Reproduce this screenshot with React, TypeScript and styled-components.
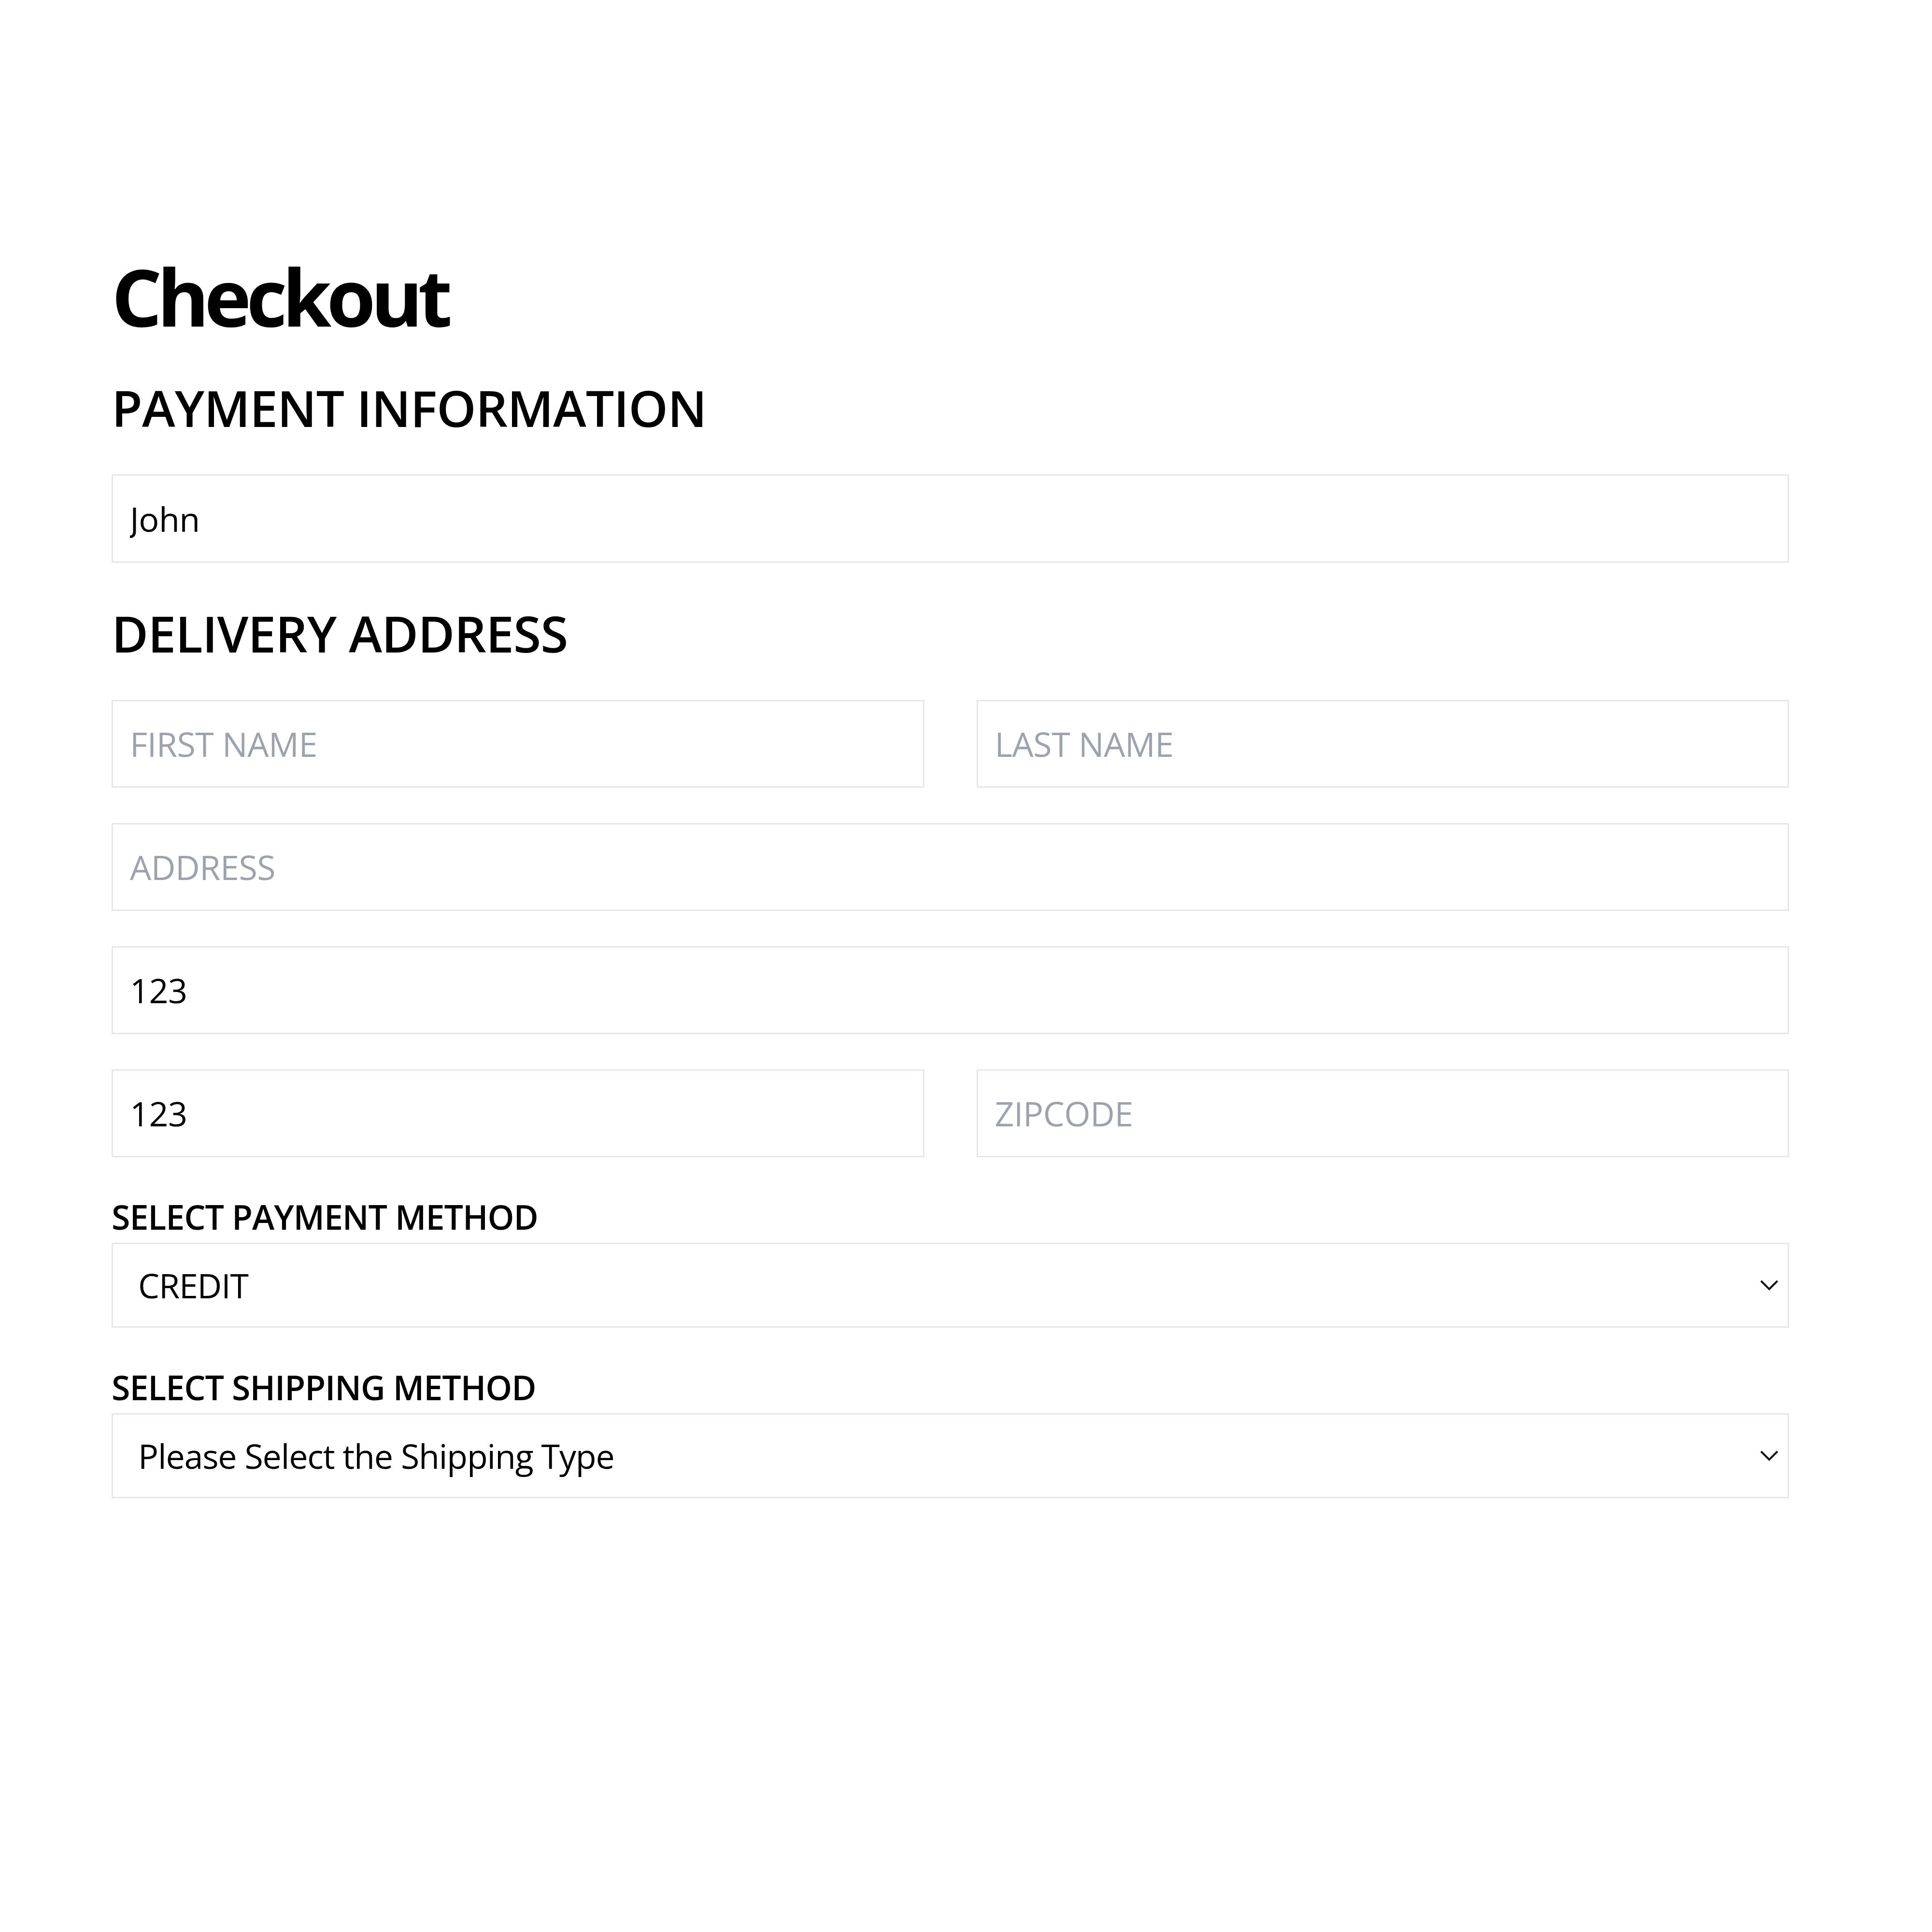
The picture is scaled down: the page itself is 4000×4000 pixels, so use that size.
import React from "react";
import styled, { createGlobalStyle } from "styled-components";

const GlobalStyle = createGlobalStyle`
  html, body {
    margin: 0;
    padding: 0;
    background: #ffffff;
  }
  body {
    font-family: "Open Sans", "Noto Sans", "Liberation Sans", sans-serif;
    color: #000000;
  }
  * { box-sizing: border-box; }
`;

const Page = styled.main`
  width: 3473px;
  margin-left: 231px;
  padding-top: 531px;
  padding-bottom: 600px;
  display: flex;
  flex-direction: column;
`;

const Title = styled.h1`
  margin: 0;
  font-size: 164px;
  line-height: 164px;
  font-weight: 700;
  letter-spacing: -10px;
`;

const SectionTitle = styled.h2<{ $mt: number }>`
  margin: ${(p) => p.$mt}px 0 0 0;
  font-size: 104px;
  line-height: 104px;
  font-weight: 600;
  letter-spacing: -1px;
`;

const Field = styled.input`
  display: block;
  width: 100%;
  height: 182px;
  margin: 0;
  padding: 0 35px;
  border: 3px solid #e5e7eb;
  border-radius: 0;
  background: #ffffff;
  font-family: inherit;
  font-size: 70px;
  font-weight: 400;
  letter-spacing: -0.5px;
  color: #000000;
  outline: none;
  &::placeholder {
    color: #9ca3af;
    opacity: 1;
  }
`;

const TopField = styled(Field)`
  margin-top: 86px;
  height: 183px;
`;

const FieldStack = styled.div`
  margin-top: 86px;
  display: flex;
  flex-direction: column;
  gap: 73px;
`;

const Row = styled.div`
  display: grid;
  grid-template-columns: 1fr 1fr;
  column-gap: 108px;
`;

const SelectGroup = styled.div`
  margin-top: 88px;
  display: flex;
  flex-direction: column;
  gap: 19px;
`;

const Label = styled.label`
  display: block;
  font-size: 70px;
  line-height: 70px;
  font-weight: 600;
  letter-spacing: -1.1px;
`;

const SelectWrap = styled.div`
  position: relative;
  height: 176px;
`;

const Select = styled.select`
  appearance: none;
  -webkit-appearance: none;
  display: block;
  width: 100%;
  height: 100%;
  margin: 0;
  padding: 0 120px 0 52px;
  border: 3px solid #e5e7eb;
  border-radius: 0;
  background: #ffffff;
  font-family: inherit;
  font-size: 70px;
  font-weight: 400;
  letter-spacing: -1.2px;
  color: #000000;
  outline: none;
`;

const Chevron = styled.svg`
  position: absolute;
  right: 22px;
  top: 50%;
  width: 38px;
  height: 22px;
  transform: translateY(-50%);
  pointer-events: none;
`;

function ChevronIcon() {
  return (
    <Chevron viewBox="0 0 38 22" fill="none">
      <polyline
        points="2,2 19,19 36,2"
        stroke="#111111"
        strokeWidth="4"
        strokeLinecap="butt"
        strokeLinejoin="miter"
      />
    </Chevron>
  );
}

export default function App() {
  return (
    <>
      <GlobalStyle />
      <Page>
        <Title>Checkout</Title>
        <SectionTitle $mt={97}>PAYMENT INFORMATION</SectionTitle>
        <TopField defaultValue="John" />
        <SectionTitle $mt={94}>DELIVERY ADDRESS</SectionTitle>
        <FieldStack>
          <Row>
            <Field placeholder="FIRST NAME" />
            <Field placeholder="LAST NAME" />
          </Row>
          <Field placeholder="ADDRESS" />
          <Field defaultValue="123" />
          <Row>
            <Field defaultValue="123" />
            <Field placeholder="ZIPCODE" />
          </Row>
        </FieldStack>
        <SelectGroup>
          <Label htmlFor="payment">SELECT PAYMENT METHOD</Label>
          <SelectWrap>
            <Select id="payment" defaultValue="CREDIT">
              <option value="CREDIT">CREDIT</option>
              <option value="DEBIT">DEBIT</option>
            </Select>
            <ChevronIcon />
          </SelectWrap>
        </SelectGroup>
        <SelectGroup>
          <Label htmlFor="shipping">SELECT SHIPPING METHOD</Label>
          <SelectWrap>
            <Select id="shipping" defaultValue="">
              <option value="">Please Select the Shipping Type</option>
              <option value="standard">Standard</option>
              <option value="express">Express</option>
            </Select>
            <ChevronIcon />
          </SelectWrap>
        </SelectGroup>
      </Page>
    </>
  );
}
